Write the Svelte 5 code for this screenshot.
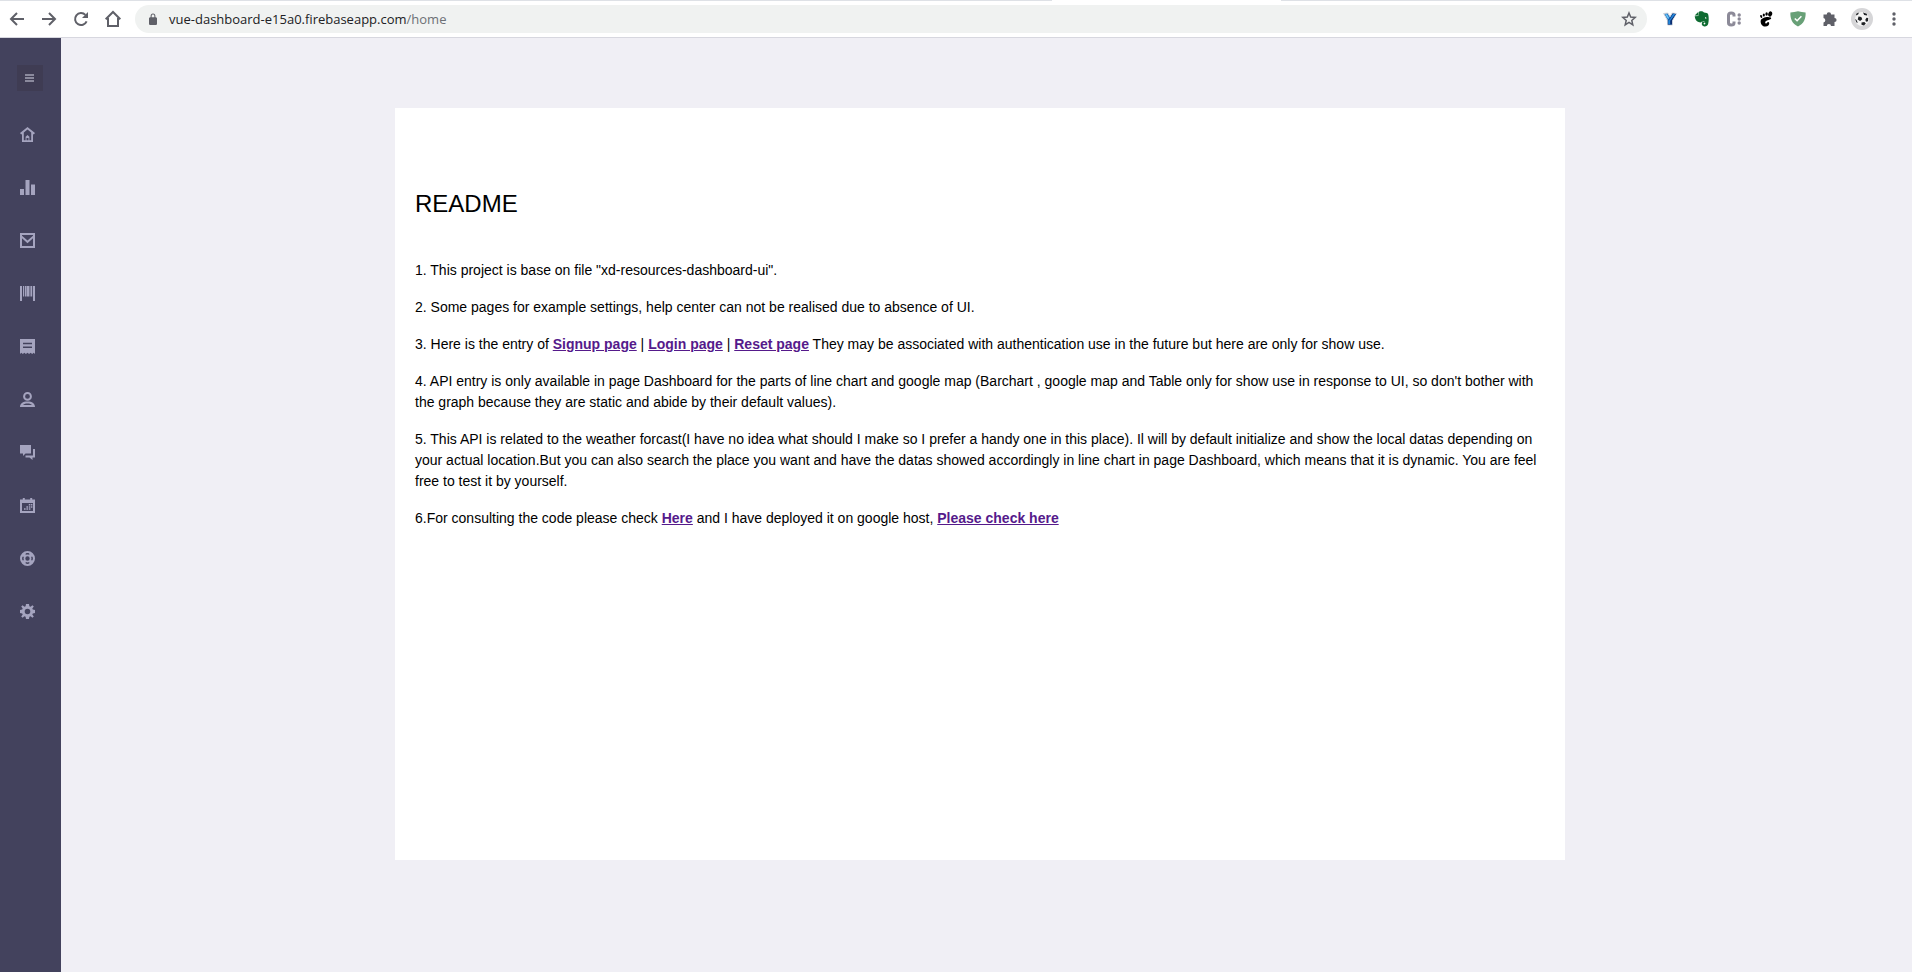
<script>
  const nav = [
    { name: 'Home', d: 'M0 6 7.5 0 15 6 13.8 7.6 13 7V15H2V7L1.200 7.600ZM3.800 5.500V13.200H5.600V9.800L7.500 8 9.400 9.800V13.200H11.200V5.500L7.500 2.500ZM6.500 11H8.500V13.200H6.500Z' },
    { name: 'Dashboard', d: 'M0 9H4V15H0ZM5.5 0H9.5V15H5.5ZM11 4.5H15V15H11Z' },
    { name: 'Mail', d: 'M0 0H15V15H0ZM2 5.300V13H13V5.300L7.5 10.300ZM2 2V2.800L7.5 7.400 13 2.800V2Z' },
    { name: 'Products', d: 'M0 0H2V15H0ZM3 0H4.200V10.5H3ZM5 0H6.6V10.5H5ZM7 0H9V10.5H7ZM9.500 0H10.6V10.5H9.500ZM11 0H12.200V10.5H11ZM13 0H15V15H13Z' },
    { name: 'Invoices', d: 'M0 0H15V15L13.7 13.8 12.2 15 10.6 13.8 9.1 15 7.5 13.8 5.9 15 4.4 13.8 2.8 15 1.3 13.8 0 15ZM3 3.800V5.200H12V3.800ZM3 7.500V8.900H12V7.500Z' },
    { name: 'Customers', d: 'M7.5 0A4.4 4.4 0 1 1 7.5 8.8 4.4 4.4 0 0 1 7.5 0ZM7.5 2A2.4 2.4 0 1 0 7.5 6.8 2.4 2.4 0 0 0 7.5 2ZM0 15C0 11.4 2.7 9.4 7.5 9.4S15 11.4 15 15ZM3 13.1H12C11.3 12 9.8 11.5 7.5 11.5S3.7 12 3 13.1Z' },
    { name: 'Chat', d: 'M0 0H11V8.500H5.500L3 11V8.500H0ZM13 4H15V12.500H12.500V15L9.5 12.500H5.500V10.400H13Z' },
    { name: 'Calendar', d: 'M2.800 0H4.800V1.6H10.2V0H12.2V1.6H15V15H0V1.6H2.800ZM2 5V13H13V5ZM8.800 6H10.4V7.6H8.800ZM11 6H12.4V7.6H11ZM6.4 8.2H8V9.8H6.4ZM8.800 8.2H10.4V9.8H8.800ZM11 8.2H12.4V9.8H11ZM4 10.3H5.6V11.8H4ZM6.4 10.3H8V11.8H6.4ZM8.800 10.3H10.4V11.8H8.800Z' },
    { name: 'Help center', d: 'M7.5 0A7.5 7.5 0 1 1 7.5 15 7.5 7.5 0 0 1 7.5 0ZM7.5 5.300A2.2 2.2 0 1 0 7.5 9.700 2.2 2.2 0 0 0 7.5 5.300ZM5.700 2.400V3.900C6.9 3.400 8.1 3.400 9.300 3.900V2.400C8.1 2 6.9 2 5.700 2.400ZM5.700 12.600C6.9 13 8.1 13 9.300 12.600V11.100C8.1 11.600 6.9 11.600 5.700 11.100ZM2.400 5.700C2 6.9 2 8.1 2.400 9.300H3.900C3.400 8.1 3.400 6.9 3.900 5.700ZM12.600 5.700H11.100C11.600 6.9 11.600 8.1 11.100 9.300H12.600C13 8.1 13 6.9 12.600 5.700Z' },
    { name: 'Settings', d: 'M6 0H9L9.4 2.2 10.6 2.7 12.4 1.2 13.8 2.6 12.3 4.4 12.8 5.6 15 6V9L12.8 9.4 12.3 10.6 13.8 12.4 12.4 13.8 10.6 12.3 9.4 12.8 9 15H6L5.6 12.8 4.4 12.3 2.6 13.8 1.2 12.4 2.7 10.6 2.2 9.4 0 9V6L2.2 5.6 2.7 4.4 1.2 2.6 2.6 1.2 4.4 2.7 5.6 2.2ZM7.5 4.7A2.8 2.8 0 1 0 7.5 10.3 2.8 2.8 0 0 0 7.5 4.7Z' }
  ];
</script>

<header class="toolbar">
  <div class="tabs"><span></span><span></span></div>
  <button class="tool" aria-label="Back">
    <svg width="16" height="16" viewBox="0 0 16 16" class="line"><path d="M15 8H2M8 2 2 8l6 6" /></svg>
  </button>
  <button class="tool" aria-label="Forward">
    <svg width="16" height="16" viewBox="0 0 16 16" class="line"><path d="M1 8h13M8 2l6 6-6 6" /></svg>
  </button>
  <button class="tool" aria-label="Reload">
    <svg width="16" height="16" viewBox="0 0 16 16"><path class="line" d="M13.6 10.4A6 6 0 1 1 12.4 3.9" /><path fill="#5f6068" d="M15 1v6H9Z" /></svg>
  </button>
  <button class="tool" aria-label="Home page">
    <svg width="18" height="18" viewBox="0 0 18 18" class="line"><path d="M1.7 9.2 9 2l7.3 7.2M4 8v8h10V8" /></svg>
  </button>
  <div class="address">
    <svg width="8" height="12" viewBox="0 0 10 14" preserveAspectRatio="none"><path fill="#5f6068" fill-rule="evenodd" d="M2 5V3.5a3 3 0 0 1 6 0V5h1l1 1v7l-1 1H1l-1-1V6l1-1ZM3.3 5h3.4V3.5a1.7 1.7 0 0 0-3.4 0Z" /></svg>
    <div class="url">vue-dashboard-e15a0.firebaseapp.com<span>/home</span></div>
    <button class="star" aria-label="Bookmark this page">
      <svg width="16" height="16" viewBox="0 0 16 16"><path fill="none" stroke="#5f6068" stroke-width="1.500" d="m8 2 1.700 4 4.500.4-3.400 3 1 4.400L8 11.400l-3.800 2.400 1-4.400-3.400-3 4.500-.4Z" /></svg>
    </button>
  </div>
  <div class="extensions">
    <button class="tool" aria-label="Y extension">
      <svg width="14" height="14" viewBox="0 0 14 14"><path fill="#1b6fc4" stroke="#d4d6da" stroke-width="1" d="M.6 1.500 4.700 1 7 4.700 9.300 1l4.100.5-4 7V13H4.600V8.500Z" /><path fill="#0c2c70" d="M13 2 9.800 1.500 7 6.200 4.800 8.300v4.200H9V8.300Z" /><path fill="#2386d8" d="M12.500 2H10L7 7l-1.800 1.500V12h2V8.800Z" /><path fill="#6cc5f4" d="M2 2.200h2l2 3.500-.8 1.500Z" /></svg>
    </button>
    <button class="tool" aria-label="Evernote extension">
      <svg width="16" height="16" viewBox="0 0 16 16"><path fill="#0e6b31" fill-rule="evenodd" d="M5 .8C6.500 0 9 .2 10 1.500c2 .1 3.800.4 4.300 2.200.6 2.800.6 6-.1 9-.5 2-1.900 2.800-3.800 2.700-2-.1-3.100-1.600-2.500-3.400.3-1 1.400-1.600 2.700-1.300l-.1 1.300c-.8 0-1 .4-.9.9.2.6 1.300.7 1.700.1.100-.8 0-1.300-.5-1.700-.8-.3-2 0-2.900-.7-.4.800-1.300 1-2.700.7C2.500 10.700.9 8 .7 5.200L4.300 5ZM11 6.200v1.400h1.500C12.500 6.600 12 6.200 11 6.200Z" /><path fill="#0e6b31" d="M.7 4.500 4.400.8v3.700Z" /></svg>
    </button>
    <button class="tool" aria-label="C extension">
      <svg width="16" height="16" viewBox="0 0 16 16"><path fill="none" stroke="#8c8a98" stroke-width="3" d="M8 5.500V4C8 2.600 7 1.900 5.200 1.900S2.500 2.700 2.500 4.200v7.600c0 1.500.9 2.300 2.700 2.300S8 13.400 8 12v-1.500" /><g fill="#8c8a98"><circle cx="13.200" cy="4" r="1.700" /><circle cx="13.200" cy="8" r="1.700" /><circle cx="13.200" cy="12" r="1.700" /></g></svg>
    </button>
    <button class="tool" aria-label="Foot extension">
      <svg width="14" height="16" viewBox="0 0 14 16"><ellipse cx="11.200" cy="3" rx="1.900" ry="2.700" transform="rotate(20 11.200 3)" /><ellipse cx="7.600" cy="3" rx="1.200" ry="1.800" /><ellipse cx="4.800" cy="4" rx="1.100" ry="1.600" /><ellipse cx="2.200" cy="5.500" rx="1" ry="1.500" transform="rotate(-20 2.200 5.500)" /><path d="M11.900 6.500C8.500 5.100 2.800 6.500 1.800 9.300c-.8 2.700 1.200 6.400 4.500 6.300 2.600-.1 4.200-2.100 3.900-3.700-.3-1.200-1.500-1.300-2-.4-.5 1-1.300 1.400-1.900.5-.8-1.300 1-2.300 3.200-2.900 2-.5 3.400-1.700 2.400-2.600Z" /></svg>
    </button>
    <button class="tool" aria-label="Shield extension">
      <svg width="16" height="16" viewBox="0 0 16 16"><path fill="#68a077" d="M8 .3c2.400.7 5 1 7.600 1.200.4 5.800-1.700 11.300-7.600 14C2.100 12.800 0 7.300.4 1.500 3 1.300 5.600 1 8 .3Z" /><path fill="none" stroke="#fff" stroke-width="1.500" d="m4.800 7.500 2.300 2.300 4.300-4.500" /></svg>
    </button>
    <button class="tool" aria-label="Extensions">
      <svg width="16" height="16" viewBox="0 0 16 16"><path fill="#5f6068" d="M1.500 3.500h3.200a2.200 2.200 0 1 1 4.400 0h3.400v3.400a2.100 2.100 0 1 1 0 4.200V15H9a2.100 2.100 0 0 0-4.200 0H1.500v-3.500a2.300 2.300 0 0 0 0-4.500Z" /></svg>
    </button>
    <button class="tool" aria-label="Profile">
      <svg width="22" height="22" viewBox="0 0 22 22"><circle cx="11" cy="11" r="11" fill="#d6d6d8" /><circle cx="11" cy="11" r="7" fill="#f4f4f4" /><path fill="#1f2225" d="m7.500 8.500 2.800.5 1 2.300-2.200 1.700-2.400-1.500ZM5 6l2.500-1.500L7.500 6 5.500 7.500ZM12 4.500l3.700 1.300.5 1.700-3-.5ZM15.500 9.800l1.700.2-.2 3.200-2 .6-.7-2ZM4 11l1.500 1 1.300 2.800-1.300-.3ZM10.500 14.500l2.800-.5 1.500 1.500-1.800 2-2.500-.8Z" /></svg>
    </button>
    <button class="tool" aria-label="Browser menu">
      <svg width="4" height="14" viewBox="0 0 4 14" fill="#5f6068"><circle cx="2" cy="2" r="1.700" /><circle cx="2" cy="7" r="1.700" /><circle cx="2" cy="12" r="1.700" /></svg>
    </button>
  </div>
</header>

<div class="page">
  <aside>
    <button class="menu" aria-label="Toggle menu">
      <svg width="10" height="8" viewBox="0 0 10 8"><path stroke="#a5a4b7" stroke-width="1.500" d="M0 1h9M0 4h9M0 7h9" /></svg>
    </button>
    <nav>
      {#each nav as item}
        <a href="#{item.name}" aria-label={item.name}>
          <svg width="15" height="15" viewBox="0 0 15 15"><path fill-rule="evenodd" d={item.d} /></svg>
        </a>
      {/each}
    </nav>
  </aside>
  <main>
    <article>
      <h1>README</h1>
      <p>1. This project is base on file "xd-resources-dashboard-ui".</p>
      <p>2. Some pages for example settings, help center can not be realised due to absence of UI.</p>
      <p>3. Here is the entry of <a href="#signup">Signup page</a> | <a href="#login">Login page</a> | <a href="#reset">Reset page</a> They may be associated with authentication use in the future but here are only for show use.</p>
      <p>4. API entry is only available in page Dashboard for the parts of line chart and google map (Barchart , google map and Table only for show use in response to UI, so don't bother with the graph because they are static and abide by their default values).</p>
      <p>5. This API is related to the weather forcast(I have no idea what should I make so I prefer a handy one in this place). Il will by default initialize and show the local datas depending on your actual location.But you can also search the place you want and have the datas showed accordingly in line chart in page Dashboard, which means that it is dynamic. You are feel free to test it by yourself.</p>
      <p>6.For consulting the code please check <a href="#code">Here</a> and I have deployed it on google host, <a href="#host">Please check here</a></p>
    </article>
  </main>
</div>

<style>
  :global(body) {
    margin: 0;
    font-family: "Liberation Sans", Arial, sans-serif;
  }
  :global(#app) {
    display: flex;
    flex-direction: column;
    min-height: 100vh;
  }
  button {
    border: 0;
    padding: 0;
    background: none;
    display: flex;
    align-items: center;
    justify-content: center;
  }
  .line {
    fill: none;
    stroke: #5f6068;
    stroke-width: 2;
  }
  .toolbar {
    position: relative;
    display: flex;
    align-items: center;
    box-sizing: border-box;
    height: 38px;
    padding: 1px 2px 0 1px;
    background: #fff;
    border-bottom: 1px solid #d7d7df;
  }
  .tabs {
    position: absolute;
    inset: 0 0 auto;
    display: flex;
    justify-content: space-between;
  }
  .tabs span {
    height: 1px;
    width: 55%;
    background: #dee1e6;
  }
  .tabs span:last-child {
    width: 33%;
  }
  .tool {
    width: 32px;
    height: 28px;
    flex: none;
  }
  .address {
    flex: 1;
    display: flex;
    align-items: center;
    height: 28px;
    margin: 0 7px 0 6px;
    padding: 0 10px 0 14px;
    border-radius: 14px;
    background: #f0f2f1;
  }
  .url {
    flex: 1;
    margin-left: 12px;
    font: 13px/20px "Open Sans", "Noto Sans", sans-serif;
    color: #202124;
  }
  .url span {
    color: #6c7075;
  }
  .extensions {
    display: flex;
  }
  .page {
    flex: 1;
    display: flex;
    background: #f0eff5;
  }
  aside {
    flex: none;
    width: 61px;
    background: #43425d;
  }
  .menu {
    width: 26px;
    height: 26px;
    margin: 27px 0 0 17px;
    background: #3f3c53;
  }
  nav {
    display: flex;
    flex-direction: column;
    gap: 38px;
    margin: 36px 0 0 20px;
  }
  nav a {
    display: flex;
    width: 15px;
    height: 15px;
  }
  nav path {
    fill: #a5a4bf;
  }
  main {
    flex: 1;
    display: flex;
    justify-content: center;
    align-items: flex-start;
    padding: 70px 13px 70px 0;
  }
  article {
    box-sizing: border-box;
    width: 100%;
    max-width: 1170px;
    min-height: 752px;
    padding: 82px 20px 20px;
    background: #fff;
    color: #000;
    font-size: 14px;
    line-height: 21px;
  }
  h1 {
    margin: 0 0 42px;
    font-size: 24px;
    line-height: 28px;
    font-weight: 400;
  }
  p {
    margin: 0 0 16px;
  }
  p a {
    color: #551a8b;
    font-weight: 700;
  }
</style>
